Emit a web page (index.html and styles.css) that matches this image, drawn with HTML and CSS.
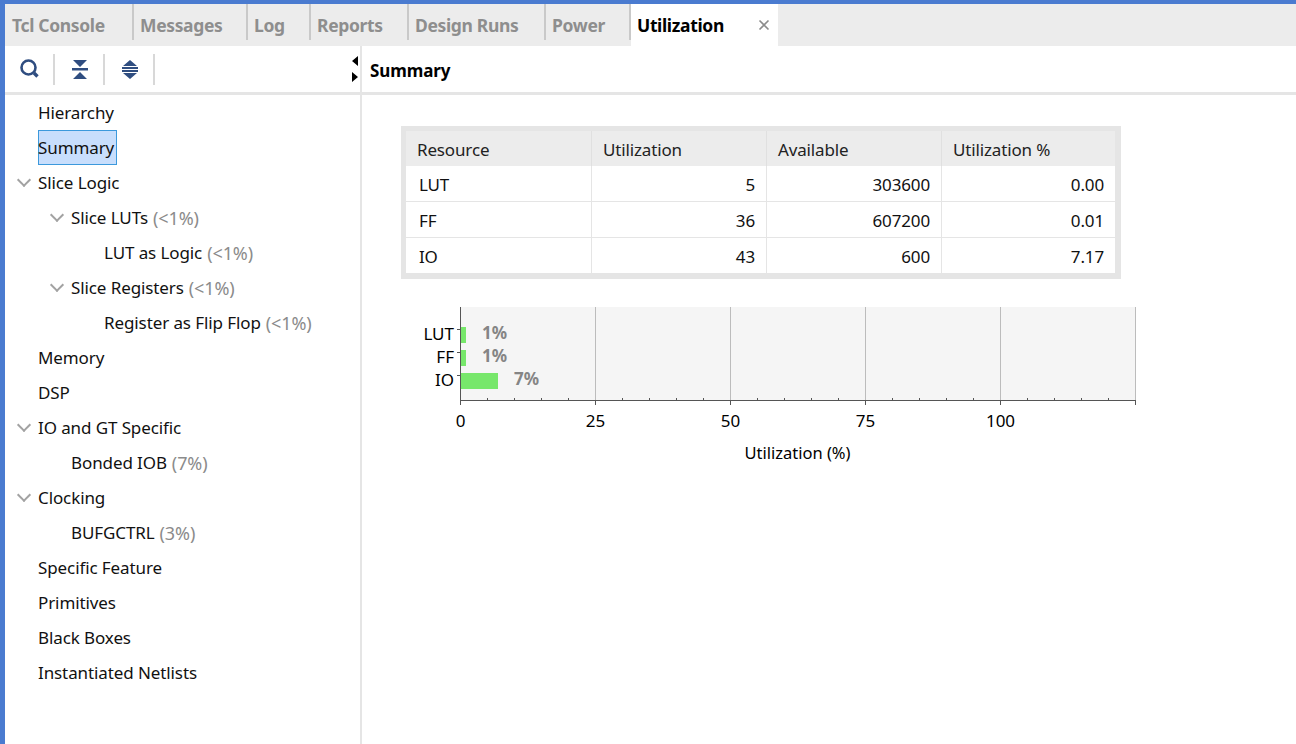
FILE: index.html
```html
<!DOCTYPE html>
<html lang="en">
<head>
    <meta charset="UTF-8">
    <title>Utilization</title>
    <link rel="stylesheet" href="styles.css">
</head>
<body>
    <div class="tabs">
        <div class="tab" style="width:129px">Tcl Console</div>
        <div class="tab" style="width:114px">Messages</div>
        <div class="tab" style="width:63px">Log</div>
        <div class="tab" style="width:98px">Reports</div>
        <div class="tab" style="width:137px">Design Runs</div>
        <div class="tab" style="width:85px">Power</div>
        <div class="tab active">Utilization
            <svg class="close" width="12" height="12" viewBox="0 0 12 12"><path d="M1.5 1.5l9 9M10.5 1.5l-9 9" stroke="#8c8c8c" stroke-width="1.6" fill="none"/></svg>
        </div>
    </div>
    <div class="main">
        <div class="left">
            <div class="toolbar">
                <svg class="tool first" width="20" height="20" viewBox="0 0 20 20">
                    <circle cx="8.5" cy="8.5" r="7" fill="none" stroke="#2f4d80" stroke-width="2.6"/>
                    <path d="M14 14l3.500 3.500" stroke="#2f4d80" stroke-width="3.400"/>
                </svg>
                <span class="sep"></span>
                <svg class="tool" width="16" height="20" viewBox="0 0 16 20">
                    <path d="M1 1h14l-7 7zM1 20h14l-7-7z" fill="#2f4d80"/>
                    <path d="M0 9h16v2.500H0z" fill="#2f4d80"/>
                </svg>
                <span class="sep"></span>
                <svg class="tool" width="16" height="20" viewBox="0 0 16 20">
                    <path d="M8 1l7 6H1zM8 20l-7-6h14z" fill="#2f4d80"/>
                    <path d="M0 8h16v2H0zM0 11h16v2H0z" fill="#2f4d80"/>
                </svg>
                <span class="sep"></span>
                <svg class="splitter" width="6" height="27" viewBox="0 0 6 27">
                    <path d="M6 0v10L0 5zM0 16l6 5-6 5z" fill="#000"/>
                </svg>
            </div>
            <ul class="tree">
                <li class="lvl0"><span class="name">Hierarchy</span></li>
                <li class="lvl0"><span class="name selected">Summary</span></li>
                <li class="lvl0 open"><span class="name">Slice Logic</span></li>
                <li class="lvl1 open"><span class="name">Slice LUTs</span> <span class="pct">(&lt;1%)</span></li>
                <li class="lvl2"><span class="name">LUT as Logic</span> <span class="pct">(&lt;1%)</span></li>
                <li class="lvl1 open"><span class="name">Slice Registers</span> <span class="pct">(&lt;1%)</span></li>
                <li class="lvl2"><span class="name">Register as Flip Flop</span> <span class="pct">(&lt;1%)</span></li>
                <li class="lvl0"><span class="name">Memory</span></li>
                <li class="lvl0"><span class="name">DSP</span></li>
                <li class="lvl0 open"><span class="name">IO and GT Specific</span></li>
                <li class="lvl1"><span class="name">Bonded IOB</span> <span class="pct">(7%)</span></li>
                <li class="lvl0 open"><span class="name">Clocking</span></li>
                <li class="lvl1"><span class="name">BUFGCTRL</span> <span class="pct">(3%)</span></li>
                <li class="lvl0"><span class="name">Specific Feature</span></li>
                <li class="lvl0"><span class="name">Primitives</span></li>
                <li class="lvl0"><span class="name">Black Boxes</span></li>
                <li class="lvl0"><span class="name">Instantiated Netlists</span></li>
            </ul>
        </div>
        <div class="right">
            <div class="title">Summary</div>
            <div class="content">
                <table class="util">
                    <thead>
                        <tr><th class="c1">Resource</th><th class="c2">Utilization</th><th class="c3">Available</th><th class="c4">Utilization %</th></tr>
                    </thead>
                    <tbody>
                        <tr><td>LUT</td><td class="num">5</td><td class="num">303600</td><td class="num">0.00</td></tr>
                        <tr><td>FF</td><td class="num">36</td><td class="num">607200</td><td class="num">0.01</td></tr>
                        <tr><td>IO</td><td class="num">43</td><td class="num">600</td><td class="num">7.17</td></tr>
                    </tbody>
                </table>
                <svg class="chart" width="760" height="170" viewBox="400 300 760 170">
                    <rect x="460" y="307" width="675" height="93" fill="#f5f5f5"/>
                    <path d="M595.500 307v93M730.500 307v93M865.500 307v93M1000.500 307v93M1135.500 307v93" stroke="#bcbcbc" stroke-width="1" fill="none"/>
                    <rect x="460" y="327" width="6" height="16" fill="#77e76b"/>
                    <rect x="460" y="350" width="6" height="16" fill="#77e76b"/>
                    <rect x="460" y="373" width="38" height="16" fill="#77e76b"/>
                    <path d="M460.500 307v98M460 400.500h676" stroke="#555" stroke-width="1" fill="none"/>
                    <path d="M457 329.500h3M457 352.500h3M457 375.500h3" stroke="#555" stroke-width="1" fill="none"/>
                    <path d="M595.500 400v5M730.500 400v5M865.500 400v5M1000.500 400v5M1135.500 400v5" stroke="#555" stroke-width="1" fill="none"/>
                    <path d="M487.500 398v2M514.500 398v2M541.500 398v2M568.500 398v2M622.500 398v2M649.500 398v2M676.500 398v2M703.500 398v2M757.500 398v2M784.500 398v2M811.500 398v2M838.500 398v2M892.500 398v2M919.500 398v2M946.500 398v2M973.500 398v2M1027.500 398v2M1054.500 398v2M1081.500 398v2M1108.500 398v2" stroke="#555" stroke-width="1" fill="none"/>
                    <text class="cat" x="454" y="340">LUT</text>
                    <text class="cat" x="454" y="363">FF</text>
                    <text class="cat" x="454" y="386">IO</text>
                    <text class="val" x="482" y="339">1%</text>
                    <text class="val" x="482" y="362">1%</text>
                    <text class="val" x="514" y="385">7%</text>
                    <text class="tick" x="460.500" y="427">0</text>
                    <text class="tick" x="595.500" y="427">25</text>
                    <text class="tick" x="730.500" y="427">50</text>
                    <text class="tick" x="865.500" y="427">75</text>
                    <text class="tick" x="1000.500" y="427">100</text>
                    <text class="axis" x="797.500" y="459">Utilization (%)</text>
                </svg>
            </div>
        </div>
    </div>
</body>
</html>
```

FILE: styles.css
```css
html, body { margin: 0; padding: 0; height: 100%; overflow: hidden; }
body { font-family: "Noto Sans", sans-serif; font-size: 17px; color: #000; background: #fff; border-top: 4px solid #4a7bd0; border-left: 5px solid #4a7bd0; box-sizing: border-box; }

.tabs { display: flex; height: 42px; background: #ececec; }
.tab { box-sizing: border-box; height: 36px; padding: 0 0 0 6px; line-height: 42px; font-size: 17.500px; font-weight: 700; color: #8e8e8e; border-right: 2px solid #c9c9c9; letter-spacing: -0.35px; }
.tab:first-child { padding-left: 7px; }
.tab.active { display: flex; justify-content: space-between; align-items: center; width: 147px; height: 42px; padding: 2px 8px 0 6px; line-height: 1; background: #fff; color: #000; border-right: none; }
.close { margin-top: -2px; }

.main { display: flex; height: 698px; }
.left { box-sizing: border-box; width: 357px; flex: none; border-right: 2px solid #e5e5e5; }
.toolbar { box-sizing: border-box; display: flex; align-items: center; height: 49px; border-bottom: 3px solid #e5e5e5; }
.tool { flex: none; margin: 0 15px 0 17px; }
.tool.first { margin: 0 13px 0 15px; }
.sep { flex: none; width: 2px; height: 31px; background: #d8d8d8; }
.splitter { margin-left: auto; margin-right: 2px; }

.tree { list-style: none; margin: 0; padding: 0; }
.tree li { position: relative; display: flex; align-items: center; gap: 5px; height: 35px; white-space: nowrap; letter-spacing: -0.1px; }
.lvl0 { padding-left: 33px; }
.lvl1 { padding-left: 66px; }
.lvl2 { padding-left: 99px; }
.name { color: #111; }
.pct { color: #8b8b8b; font-size: 18px; }
.selected { box-sizing: border-box; height: 35px; line-height: 33px; width: 79px; text-indent: -1px; background: #c8defc; border: 1px solid #3c99dc; }
.open::before { content: ""; position: absolute; top: 10px; width: 8px; height: 8px; border-right: 2px solid #a2a2a2; border-bottom: 2px solid #a2a2a2; transform: rotate(45deg); }
.lvl0.open::before { left: 14px; }
.lvl1.open::before { left: 47px; }

.right { flex: 1; min-width: 0; }
.title { box-sizing: border-box; height: 49px; padding: 2px 0 0 8px; line-height: 46px; font-weight: 700; font-size: 17px; border-bottom: 3px solid #e5e5e5; letter-spacing: -0.1px; }
.content { padding: 31px 0 0 39px; }

.util { box-sizing: border-box; width: 720px; height: 153px; table-layout: fixed; border-collapse: separate; border-spacing: 0; border-style: solid; border-color: #e5e5e5; border-width: 5px 6px 6px 5px; font-size: 17px; letter-spacing: -0.15px; }
.util th, .util td { box-sizing: border-box; }
.util th { height: 35px; padding: 2px 0 0 11px; background: #ececec; font-weight: 400; text-align: left; color: #222; border-left: 1px solid #e0e0e0; }
.util td { height: 36px; padding: 2px 11px 0 13px; border-left: 1px solid #e5e5e5; border-top: 1px solid #e5e5e5; color: #111; }
.util th:first-child, .util td:first-child { border-left: none; }
.util tbody tr:first-child td { height: 35px; border-top: none; }
.c1 { width: 185px; }
.c2, .c3 { width: 175px; }
.c4 { width: 174px; }
.num { text-align: right; }

.chart { display: block; margin: 21px 0 0 -1px; }
.cat { font-size: 17px; text-anchor: end; fill: #000; }
.val { font-size: 17px; font-weight: 700; fill: #858585; }
.tick { font-size: 17px; text-anchor: middle; fill: #000; }
.axis { font-size: 16.500px; text-anchor: middle; fill: #000; }
```
